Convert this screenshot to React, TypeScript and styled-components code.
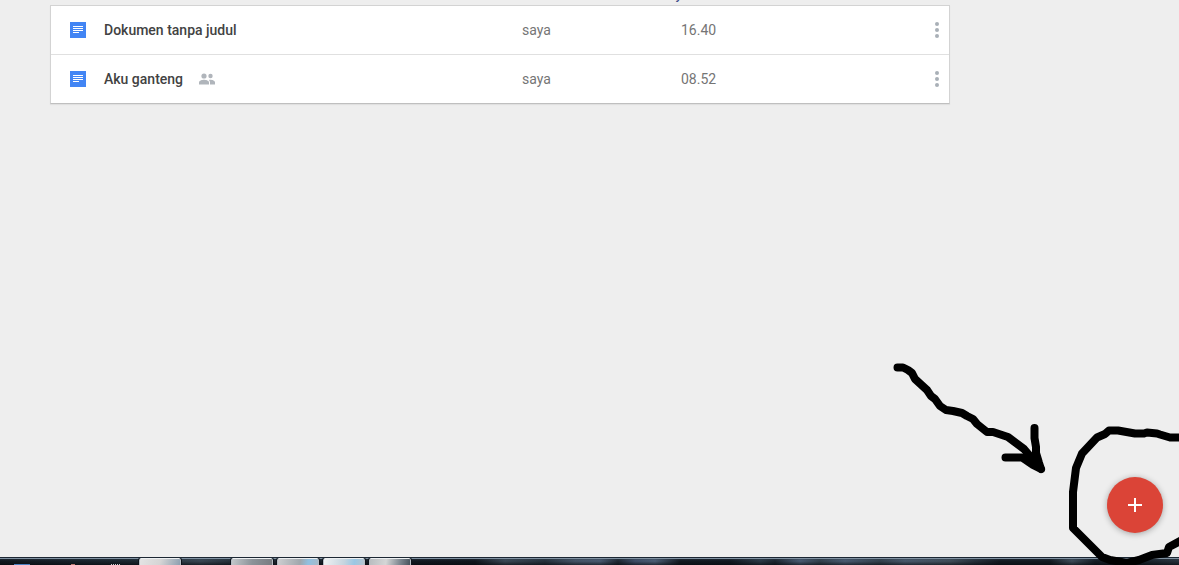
import React from 'react';
import styled, { createGlobalStyle } from 'styled-components';

const GlobalStyle = createGlobalStyle`
  *, *::before, *::after { box-sizing: border-box; }
  html, body { margin: 0; }
  body {
    background: #eeeeee;
    font-family: Roboto, "Liberation Sans", sans-serif;
    font-size: 14px;
    line-height: 20px;
    overflow: hidden;
  }
`;

const Desktop = styled.div`
  position: relative;
  display: flex;
  flex-direction: column;
  min-height: 100vh;
  overflow: hidden;
`;

const Content = styled.main`
  flex: 1;
  width: 100%;
  max-width: 1000px;
  padding: 0 50px;
`;

const ListHeader = styled.div`
  display: flex;
  align-items: flex-end;
  height: 5px;
  padding-left: 612px;
  overflow: hidden;
`;

const SortLink = styled.a`
  color: #3b4a8a;
  font-size: 13px;
  font-weight: 500;
  line-height: 20px;
  text-decoration: none;
`;

const Card = styled.section`
  background: #ffffff;
  border: 1px solid #d3d3d3;
  border-bottom-color: #bfbfbf;
  box-shadow: 0 1px 1px #e0e0e0;
`;

const FileTable = styled.table`
  width: 100%;
  table-layout: fixed;
  border-spacing: 0;
`;

const Cell = styled.td<{ $width?: string }>`
  width: ${({ $width }) => $width ?? 'auto'};
  height: 48px;
  padding: 0;
  color: #757575;
  vertical-align: middle;
`;

const FileRow = styled.tr`
  & + & > ${Cell} {
    height: 49px;
    border-top: 1px solid #e0e0e0;
  }
`;

const NameGroup = styled.div`
  display: flex;
  align-items: center;
  padding-left: 19px;
`;

const FileLink = styled.a`
  margin: 0 16px 0 18px;
  color: #424242;
  font-weight: 500;
  text-decoration: none;
`;

const Icon = styled.svg`
  display: block;
  flex: none;
`;

const MenuButton = styled.button`
  display: flex;
  justify-content: center;
  width: 24px;
  height: 24px;
  margin-left: auto;
  padding: 4px 0;
  border: 0;
  background: transparent;
  cursor: pointer;
`;

const Taskbar = styled.footer`
  display: flex;
  height: 8px;
  border-top: 1px solid #1c2733;
  overflow: hidden;
  background:
    linear-gradient(#7f90a0 0 1px, transparent 1px),
    linear-gradient(#2d3b4866 1px, transparent 3px, #05080c99 7px),
    linear-gradient(90deg,
      #10171e 0, #18222b 80px, #1d2831 140px, #3a4854 200px, #202b34 240px,
      #111820 420px, #10161d 475px, #3c4a57 505px, #26323d 545px,
      #465669 575px, #4b5c73 600px, #1e2832 618px, #40506a 635px,
      #4d6078 655px, #121920 680px, #111820 730px, #2c3a47 760px,
      #1c2630 775px, #4b5d75 800px, #33414d 820px, #4b5d74 845px,
      #34424e 880px, #4a5b6e 905px, #42505c 950px, #26313b 975px,
      #121920 1000px, #121920 1050px, #3f4d5a 1072px, #151d25 1095px,
      #141b23 1130px, #28333d 1179px);
`;

const PinnedApps = styled.div`
  display: flex;
  flex: none;
  align-items: flex-end;
  width: 139px;
  padding-left: 14px;
`;

const PinnedApp = styled.span<{ $width: number; $color: string; $gap: number }>`
  width: ${({ $width }) => $width}px;
  height: 1px;
  margin-right: ${({ $gap }) => $gap}px;
  background: ${({ $color }) => $color};
`;

const TaskButton = styled.button<{ $fill: string; $gap: number }>`
  flex: none;
  width: 42px;
  height: 9px;
  margin-right: ${({ $gap }) => $gap}px;
  padding: 0;
  border: 1px solid #b4bcc3;
  border-top-color: #edf0f2;
  border-radius: 2px 2px 0 0;
  outline: 1px solid #0d141b;
  background: ${({ $fill }) => $fill};
`;

const Annotation = styled.svg`
  position: absolute;
  right: 0;
  bottom: 0;
  pointer-events: none;
`;

const CreateButton = styled.button`
  position: absolute;
  right: 16px;
  bottom: 32px;
  display: flex;
  align-items: center;
  justify-content: center;
  width: 56px;
  height: 56px;
  padding: 0;
  border: 0;
  border-radius: 50%;
  background: #db4437;
  box-shadow: 0 1px 6px rgba(0, 0, 0, 0.32);
  cursor: pointer;
`;

interface DocumentFile {
  name: string;
  owner: string;
  opened: string;
  shared: boolean;
}

const files: DocumentFile[] = [
  { name: 'Dokumen tanpa judul', owner: 'saya', opened: '16.40', shared: false },
  { name: 'Aku ganteng', owner: 'saya', opened: '08.52', shared: true },
];

const tasks = [
  { label: 'Task 1', gap: 50, fill: 'linear-gradient(110deg, #e4e4e4, #d5d5d5 50%, #8c9eaf)' },
  { label: 'Task 2', gap: 4, fill: 'linear-gradient(100deg, #c3c7ca, #8c9399 50%, #777c81)' },
  { label: 'Task 3', gap: 4, fill: 'linear-gradient(100deg, #cdced0, #a0a7ad 55%, #91c0e0 75%, #a6bac9)' },
  { label: 'Task 4', gap: 4, fill: 'linear-gradient(100deg, #f0f2f3, #c6d5df 50%, #9ac7e4 75%, #b7c5cf)' },
  { label: 'Task 5', gap: 0, fill: 'linear-gradient(100deg, #b9bdc0, #d4d6d6 40%, #7b858e 75%, #46515b)' },
];

const DocumentIcon = () => (
  <Icon width="16" height="16" viewBox="0 0 16 16" shapeRendering="crispEdges" aria-hidden="true">
    <path fill="#4285f4" d="M0 0h16v16H0z" />
    <path fill="#ffffff" d="M3 4h10v1H3zM3 6h10v1H3zM3 8h10v1H3zM3 10h6v1H3z" />
  </Icon>
);

const SharedIcon = () => (
  <Icon width="16" height="12" viewBox="0 0 16 12" role="img" aria-label="Dibagikan">
    <g fill="#b0b5bb">
      <circle cx="5" cy="3" r="2.6" />
      <circle cx="11.5" cy="3" r="2.2" />
      <path d="M0 11.5V9.3C0 7.6 3.2 6.7 5 6.7s5 .9 5 2.6v2.2z" />
      <path d="M11 11.5V9.3c0-1-.5-1.8-1.2-2.4.6-.1 1.2-.2 1.7-.2 1.6 0 4.5.9 4.5 2.6v2.2z" />
    </g>
  </Icon>
);

const MoreIcon = () => (
  <Icon width="4" height="16" viewBox="0 0 4 16" fill="#a9b0b7" aria-hidden="true">
    <circle cx="2" cy="2" r="2" />
    <circle cx="2" cy="8" r="2" />
    <circle cx="2" cy="14" r="2" />
  </Icon>
);

const HandDrawnMarks = () => (
  <Annotation
    width="299"
    height="215"
    viewBox="880 350 299 215"
    fill="none"
    stroke="#000000"
    strokeWidth="8"
    strokeLinecap="round"
    strokeLinejoin="round"
    aria-hidden="true"
  >
    <path d="M897.5 367.5H903L908 370L912 373L915 379L927 390L931 396L935 399L940 406L946 410L953 411L962 413L967 416L973 419L977 424L987 432H993L1008 437L1024 449L1041 469" />
    <path d="M1034.5 428V438L1036 447V453L1039 463L1041 469L1033 465L1022 457.500H1005.500" />
    <path d="M1181 437.500H1170L1160 434.500L1157 433.500L1147 432.500L1144 433.500H1135L1118 430.500H1109L1105 434L1097 437.500L1082 453.500L1076 468L1073 492V528L1102 557L1110 560L1127 563L1139 560L1152 555L1167 553L1169 547L1181 540.500" />
  </Annotation>
);

export default function App() {
  return (
    <>
      <GlobalStyle />
      <Desktop>
        <Content>
          <ListHeader>
            <SortLink href="#sort">saya</SortLink>
          </ListHeader>
          <Card>
            <FileTable>
              <tbody>
                {files.map((file) => (
                  <FileRow key={file.name}>
                    <Cell $width="471px">
                      <NameGroup>
                        <DocumentIcon />
                        <FileLink href="#document">{file.name}</FileLink>
                        {file.shared && <SharedIcon />}
                      </NameGroup>
                    </Cell>
                    <Cell $width="159px">{file.owner}</Cell>
                    <Cell>{file.opened}</Cell>
                    <Cell $width="24px">
                      <MenuButton type="button" aria-label={`Menu ${file.name}`}>
                        <MoreIcon />
                      </MenuButton>
                    </Cell>
                  </FileRow>
                ))}
              </tbody>
            </FileTable>
          </Card>
        </Content>
        <Taskbar>
          <PinnedApps>
            <PinnedApp $width={16} $gap={41} $color="#4a7fc0" />
            <PinnedApp $width={4} $gap={36} $color="#b87870" />
            <PinnedApp
              $width={9}
              $gap={0}
              $color="repeating-linear-gradient(90deg, #c8ccd0 0 1px, transparent 1px 2px)"
            />
          </PinnedApps>
          {tasks.map((task) => (
            <TaskButton key={task.label} type="button" aria-label={task.label} $fill={task.fill} $gap={task.gap} />
          ))}
        </Taskbar>
        <HandDrawnMarks />
        <CreateButton type="button" aria-label="Buat dokumen baru">
          <Icon width="14" height="14" viewBox="0 0 14 14" shapeRendering="crispEdges" aria-hidden="true">
            <path fill="#ffffff" d="M6 0h2v6h6v2H8v6H6V8H0V6h6z" />
          </Icon>
        </CreateButton>
      </Desktop>
    </>
  );
}
